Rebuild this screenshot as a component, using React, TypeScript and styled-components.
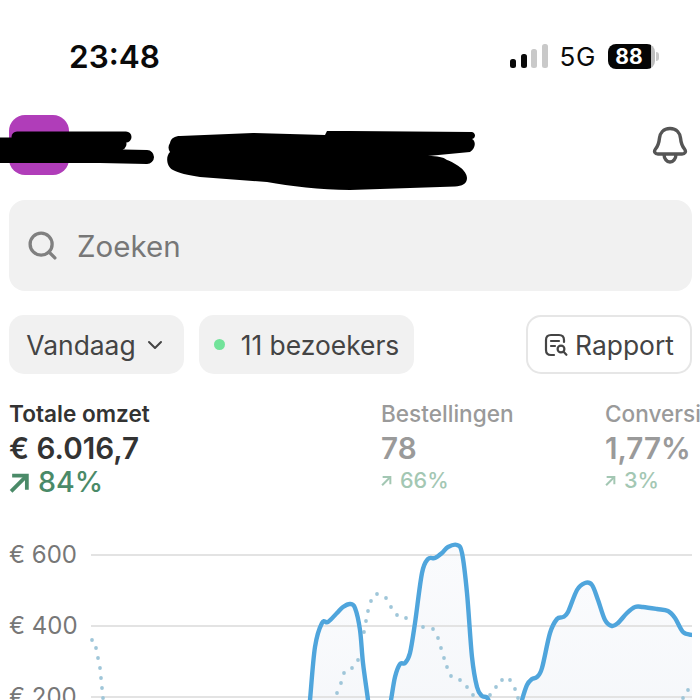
import { ChevronDown, Search } from 'lucide-react'
import styled, { createGlobalStyle } from 'styled-components'

const GlobalStyle = createGlobalStyle`
  html, body {
    margin: 0;
    height: 700px;
    overflow: hidden;
    background: #fff;
    font-family: Inter, "Liberation Sans", sans-serif;
  }
`

const Page = styled.div`
  width: 700px;
  height: 700px;
  box-sizing: border-box;
  padding: 0 8px 0 9px;
  overflow: hidden;
`

const StatusBar = styled.div`
  display: flex;
  align-items: center;
  justify-content: space-between;
  height: 36px;
  padding: 38px 37px 0 60px;
  margin-bottom: 41px;
`

const Time = styled.span`
  font-size: 31.5px;
  font-weight: 600;
  color: #0a0a0a;
`

const StatusRight = styled.div`
  display: flex;
  align-items: center;
`

const Signal = styled.div`
  display: flex;
  align-items: flex-end;
  gap: 4.5px;
  height: 24px;
  margin-right: 12px;
`

const SignalBar = styled.i<{ $h: number; $on?: boolean }>`
  display: block;
  width: 6px;
  height: ${(p) => p.$h}px;
  border-radius: 2.5px;
  background: ${(p) => (p.$on ? '#0a0a0a' : '#c9c9c9')};
`

const Network = styled.span`
  font-size: 26px;
  font-weight: 400;
  letter-spacing: 0.6px;
  color: #0a0a0a;
  margin-right: 12px;
`

const Battery = styled.div`
  position: relative;
  display: flex;
  align-items: center;
  justify-content: center;
  width: 47px;
  height: 25px;
  padding-right: 5px;
  box-sizing: border-box;
  border-radius: 8px;
  background: linear-gradient(to right, #050505 91%, #bdbdbd 91%);
  color: #fff;
  font-size: 21px;
  font-weight: 700;

  &::after {
    content: '';
    position: absolute;
    right: -4px;
    top: 8px;
    width: 3px;
    height: 9px;
    border-radius: 0 3px 3px 0;
    background: #c9c9c9;
  }
`

const Header = styled.div`
  position: relative;
  display: flex;
  align-items: center;
  justify-content: space-between;
  height: 60px;
  padding-right: 4px;
`

const Logo = styled.div`
  width: 60px;
  height: 60px;
  border-radius: 16px;
  background: #b03db9;
`

const Redaction = styled.svg`
  position: absolute;
  left: -9px;
  top: 0;
`

const SearchBox = styled.div`
  display: flex;
  align-items: center;
  gap: 18px;
  height: 91px;
  margin-top: 25px;
  padding-left: 17px;
  border-radius: 16px;
  background: #f1f1f1;
  color: #777;
  font-size: 29.5px;
`

const Filters = styled.div`
  display: flex;
  gap: 15px;
  margin-top: 24px;
`

const Chip = styled.div<{ $outlined?: boolean; $width: number }>`
  display: flex;
  align-items: center;
  justify-content: center;
  box-sizing: border-box;
  width: ${(p) => p.$width}px;
  height: 59px;
  border-radius: 15px;
  background: ${(p) => (p.$outlined ? '#fff' : '#f1f1f1')};
  border: ${(p) => (p.$outlined ? '2px solid #e6e6e6' : 'none')};
  margin-left: ${(p) => (p.$outlined ? 'auto' : '0')};
  color: #444;
  font-size: 26.4px;
  white-space: nowrap;
`

const Dot = styled.i`
  width: 11px;
  height: 11px;
  border-radius: 50%;
  background: #72e39a;
  margin-right: 16px;
`

const Stats = styled.div`
  display: grid;
  grid-template-columns: 372px 224px 1fr;
  margin-top: 25px;
`

const Stat = styled.div<{ $muted?: boolean }>`
  display: flex;
  flex-direction: column;
  white-space: nowrap;
  color: ${(p) => (p.$muted ? '#9a9a9a' : '#333')};
`

const StatTitle = styled.div<{ $muted?: boolean }>`
  font-size: 22.6px;
  line-height: 29px;
  font-weight: ${(p) => (p.$muted ? 500 : 600)};
`

const StatValue = styled.div`
  font-size: 29.6px;
  line-height: 40px;
  font-weight: 600;
`

const Change = styled.div<{ $muted?: boolean }>`
  display: flex;
  align-items: center;
  gap: ${(p) => (p.$muted ? 8 : 8)}px;
  font-size: ${(p) => (p.$muted ? 21.6 : 28.6)}px;
  line-height: ${(p) => (p.$muted ? 24 : 28)}px;
  font-weight: 500;
  color: ${(p) => (p.$muted ? '#a3c7b3' : '#4a8a68')};
`

const ChartRow = styled.div`
  display: flex;
  margin-top: 44px;
`

const Axis = styled.div`
  display: flex;
  flex-direction: column;
  gap: 41px;
  width: 81px;
  color: #777;
  font-size: 24px;
  line-height: 30px;
  white-space: nowrap;
`

type Pt = [number, number]

const line1: Pt[] = [[308, 720], [310, 700], [315, 647], [322, 623], [328, 622], [337, 613], [343, 607], [350, 604], [355, 608], [360, 630], [363, 663], [368, 700], [370, 720]]
const line2: Pt[] = [[387, 720], [391, 700], [395, 677], [400, 664], [405, 663], [410, 653], [415, 623], [422, 573], [428, 559], [435, 558], [442, 553], [448, 547], [457, 545], [462, 553], [467, 593], [472, 657], [477, 687], [482, 696], [488, 699], [494, 720]]
const line3: Pt[] = [[517, 720], [522, 700], [527, 685], [532, 679], [537, 677], [542, 668], [550, 633], [557, 619], [563, 617], [568, 612], [577, 590], [585, 583], [592, 585], [598, 600], [605, 620], [612, 626], [618, 623], [627, 613], [635, 607], [643, 607], [657, 609], [668, 611], [675, 618], [683, 632], [692, 635]]

const dots: Pt[] = [
  [92, 640], [96, 648], [98, 658], [100, 668], [101, 678], [102, 688], [103, 698],
  [337, 693], [341, 683], [344, 673], [352, 668], [358, 660], [362, 650], [364, 632], [366, 621], [368, 611], [371, 601], [377, 594],
  [386, 598], [391, 607], [397, 615], [406, 618], [423, 627], [433, 629], [438, 638], [441, 648], [444, 658], [447, 667], [451, 676],
  [460, 680], [467, 687], [473, 695], [490, 695], [496, 687], [502, 680], [510, 680], [515, 689], [518, 698], [683, 698], [688, 690],
]

// catmull-rom through the traced points
function smooth(pts: Pt[]) {
  let d = `M${pts[0][0]} ${pts[0][1]}`
  for (let i = 0; i < pts.length - 1; i++) {
    const p0 = pts[Math.max(i - 1, 0)]
    const p1 = pts[i]
    const p2 = pts[i + 1]
    const p3 = pts[Math.min(i + 2, pts.length - 1)]
    const c1x = p1[0] + (p2[0] - p0[0]) / 6
    const c1y = p1[1] + (p2[1] - p0[1]) / 6
    const c2x = p2[0] - (p3[0] - p1[0]) / 6
    const c2y = p2[1] - (p3[1] - p1[1]) / 6
    d += ` C${c1x} ${c1y} ${c2x} ${c2y} ${p2[0]} ${p2[1]}`
  }
  return d
}

function Chart() {
  return (
    <svg width="602" height="160" viewBox="90 540 602 160">
      <defs>
        <linearGradient id="area" x1="0" y1="0" x2="0" y2="1">
          <stop offset="0" stopColor="#fafbfd" />
          <stop offset="1" stopColor="#f5f7fa" />
        </linearGradient>
      </defs>
      {[line1, line2, line3].map((l, i) => (
        <path key={i} d={`${smooth(l)} V720 Z`} fill="url(#area)" />
      ))}
      {[555, 626, 697].map((y) => (
        <line key={y} x1="91" x2="692" y1={y} y2={y} stroke="#e3e3e3" strokeWidth="2" />
      ))}
      {dots.map(([x, y]) => (
        <circle key={`${x}-${y}`} cx={x} cy={y} r="1.9" fill="#9fc6d9" />
      ))}
      {[line1, line2, line3].map((l, i) => (
        <path key={i} d={smooth(l)} fill="none" stroke="#4fa5dc" strokeWidth="4.4" strokeLinecap="round" />
      ))}
    </svg>
  )
}

function Bell() {
  return (
    <svg width="36" height="38" viewBox="0 0 36 38" fill="none" stroke="#555" strokeWidth="3.4" strokeLinejoin="round">
      <path d="M18 2.5C11 2.5 8 7.5 7.5 12C7 17 6 20 3.5 23C1.5 25.5 3 28 6 28H30C33 28 34.5 25.5 32.5 23C30 20 29 17 28.5 12C28 7.5 25 2.5 18 2.5Z" />
      <path d="M12 28C12 33 15 36 18 36C21 36 24 33 24 28" />
    </svg>
  )
}

function ReportIcon() {
  return (
    <svg width="24" height="24" viewBox="0 0 24 24" fill="none" stroke="#444" strokeWidth="2.2" strokeLinecap="round" style={{ marginRight: 7 }}>
      <path d="M10 22H7C3.5 22 2 20 2 17V7C2 4 3.5 2 7 2H15C18.5 2 20 4 20 7V9" />
      <path d="M7 8H15M7 13H11" />
      <circle cx="17" cy="16" r="3.4" />
      <path d="M19.6 18.8L22.4 21.8" />
    </svg>
  )
}

function UpArrow({ size }: { size: number }) {
  return (
    <svg width={size} height={size} viewBox="0 0 20 20" fill="none" stroke="currentColor" strokeWidth="3.6">
      <path d="M2 18.5L16.5 4" />
      <path d="M3 3.5H17V17" />
    </svg>
  )
}

export default function App() {
  return (
    <>
      <GlobalStyle />
      <Page>
        <StatusBar>
          <Time>23:48</Time>
          <StatusRight>
            <Signal>
              <SignalBar $h={9} $on />
              <SignalBar $h={14} $on />
              <SignalBar $h={19} />
              <SignalBar $h={24} />
            </Signal>
            <Network>5G</Network>
            <Battery>88</Battery>
          </StatusRight>
        </StatusBar>

        <Header>
          <Logo />
          <Bell />
          <Redaction width="700" height="80" viewBox="0 115 700 80">
            <g stroke="#000" strokeLinecap="round" fill="none">
              <path d="M17 137H126" strokeWidth="11" />
              <path d="M0 144H120" strokeWidth="13" />
              <path d="M0 156H100L147 157" strokeWidth="14" />
            </g>
            <path
              d="M170 143C171 138 175 136 180 136L253 133L325 135L327 131L350 131L472 132C476 133 476 138 472 139C476 141 476 148 470 152L428 156C438 156 443 157 447 160C455 163 467 170 467 178C467 184 462 186 455 186.5L350 190C320 190 290 186 267 182L200 177C188 175 178 173 173 170C167 167 165 157 170 152C168 149 168 146 170 143Z"
              fill="#000"
            />
          </Redaction>
        </Header>

        <SearchBox>
          <Search size={33} strokeWidth={2.4} color="#808080" />
          Zoeken
        </SearchBox>

        <Filters>
          <Chip $width={175}>
            Vandaag
            <ChevronDown size={24} strokeWidth={2} color="#444" style={{ marginLeft: 7 }} />
          </Chip>
          <Chip $width={215}>
            <Dot />
            11 bezoekers
          </Chip>
          <Chip $outlined $width={166}>
            <ReportIcon />
            Rapport
          </Chip>
        </Filters>

        <Stats>
          <Stat>
            <StatTitle>Totale omzet</StatTitle>
            <StatValue>€ 6.016,7</StatValue>
            <Change>
              <UpArrow size={21} />
              84%
            </Change>
          </Stat>
          <Stat $muted>
            <StatTitle $muted>Bestellingen</StatTitle>
            <StatValue>78</StatValue>
            <Change $muted>
              <UpArrow size={11} />
              66%
            </Change>
          </Stat>
          <Stat $muted>
            <StatTitle $muted>Conversie</StatTitle>
            <StatValue>1,77%</StatValue>
            <Change $muted>
              <UpArrow size={11} />
              3%
            </Change>
          </Stat>
        </Stats>

        <ChartRow>
          <Axis>
            <span>€ 600</span>
            <span>€ 400</span>
            <span>€ 200</span>
          </Axis>
          <Chart />
        </ChartRow>
      </Page>
    </>
  )
}
